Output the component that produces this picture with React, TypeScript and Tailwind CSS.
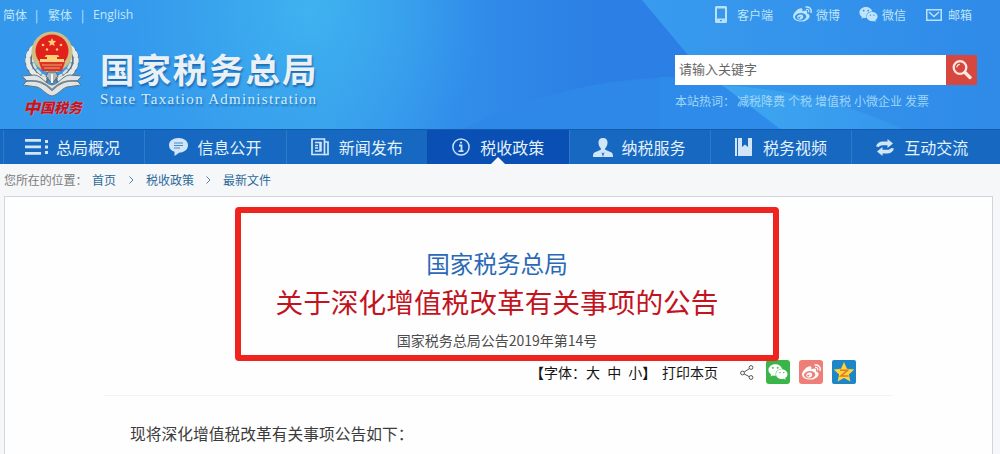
import type { ReactNode } from 'react'
import { FaWeibo, FaWeixin } from 'react-icons/fa'

const sans = "font-['Noto_Sans_CJK_SC',sans-serif]"

const PhoneIcon = () => (
  <svg width="12" height="17" viewBox="0 0 12 17" fill="#b9e2fa">
    <path fillRule="evenodd" d="M1.5 0h9A1.5 1.5 0 0 1 12 1.500v14a1.500 1.500 0 0 1-1.500 1.500h-9A1.500 1.500 0 0 1 0 15.500v-14A1.500 1.500 0 0 1 1.500 0zM2 2.500v10h8v-10zM5 14v1.300h2V14z" />
  </svg>
)

const MailIcon = () => (
  <svg width="16" height="12" viewBox="0 0 16 12" fill="none" stroke="#b9e2fa" strokeWidth="1.5">
    <rect x=".75" y=".75" width="14.500" height="10.500" />
    <path d="M3 3l5 4.500L13 3" />
  </svg>
)

const SearchIcon = () => (
  <svg width="22" height="22" viewBox="0 0 22 22" fill="none" stroke="#ffe9e2" strokeLinecap="round">
    <circle cx="9" cy="8.500" r="6.300" strokeWidth="2.300" />
    <path d="M5.800 8a3.200 3.200 0 0 1 2.600-2.700" strokeWidth="1.200" />
    <path d="M14 13.500l5 5" strokeWidth="3.400" />
  </svg>
)

const Emblem = () => (
  <svg width="62" height="66" viewBox="0 0 62 66">
    {/* wheat ears */}
    <g fill="none" strokeLinecap="round">
      <path d="M13 17C4 26 5 42 24 49M49 17c9 9 8 25-11 32" stroke="#5c7285" strokeWidth="7" />
      <path d="M12 17C3 26 5 42 24 49M50 17c9 9 7 25-12 32" stroke="#e6ebe9" strokeWidth="5" strokeDasharray="2.5 3.800" />
      <path d="M15 20C9 28 12 40 27 47M47 20c6 8 3 20-12 27" stroke="#dfe0d4" strokeWidth="2.500" strokeDasharray="4 3" />
    </g>
    <circle cx="31" cy="21" r="20.500" fill="#cfbd86" />
    <circle cx="31" cy="20" r="16.500" fill="#e3211c" />
    <path d="M18 31h26l-3 9H21z" fill="#d9332a" />
    <g fill="#ffd07a">
      <path d="M31 7l1.200 2.700 3 .3-2.200 2 .6 3-2.600-1.500-2.600 1.500.6-3-2.200-2 3-.3z" />
      <circle cx="22" cy="14" r="1.300" />
      <circle cx="40" cy="14" r="1.300" />
      <circle cx="26" cy="18.500" r="1.200" />
      <circle cx="36" cy="18.500" r="1.200" />
      <path d="M25 24h12l1.500 2H36v2h7v3H19v-3h7v-2h-2.500z" />
    </g>
    <path d="M21 34h20M23 37h16" stroke="#e9a868" strokeWidth="1.200" />
    {/* ribbon */}
    <path d="M1 45l13-1c8 2 10 9 17 10 7-1 9-8 17-10l13 1-5 5 4 4-14 2c-6 2-9 8-15 9-6-1-9-7-15-9L2 54l4-4z" fill="#dfe5e7" stroke="#65747d" strokeWidth="1" />
    <path d="M6 50c10-1 17 1 25 9 8-8 15-10 25-9" fill="none" stroke="#77858c" strokeWidth="1.800" />
    <path d="M25 45l6 8 6-8-2-4h-8z" fill="#a9b6bb" stroke="#566770" />
    <path d="M31 43v9" stroke="#f6f7f4" strokeWidth="2" />
  </svg>
)

const HeaderBackdrop = () => (
  <svg className="absolute inset-0" width="1000" height="129" viewBox="0 0 1000 129">
    <defs>
      <linearGradient id="base">
        <stop offset="0" stopColor="#3397ec" />
        <stop offset=".18" stopColor="#359bed" />
        <stop offset=".33" stopColor="#389fec" />
        <stop offset=".45" stopColor="#318eea" />
        <stop offset=".6" stopColor="#2c7fe4" />
        <stop offset="1" stopColor="#2c80e4" />
      </linearGradient>
      <radialGradient id="glow" cx="310" cy="10" r="180" gradientUnits="userSpaceOnUse">
        <stop offset="0" stopColor="#3fb2f0" />
        <stop offset="1" stopColor="#3ba9ee" stopOpacity="0" />
      </radialGradient>
      <linearGradient id="right">
        <stop offset="0" stopColor="#389bee" />
        <stop offset="1" stopColor="#2f8ae8" />
      </linearGradient>
      <linearGradient id="beam">
        <stop offset="0" stopColor="#3ea6f1" />
        <stop offset="1" stopColor="#3da5f1" stopOpacity=".3" />
      </linearGradient>
    </defs>
    <path d="M0 0h1000v129H0z" fill="url(#base)" />
    <path d="M0 0h1000v129H0z" fill="url(#glow)" />
    <path d="M464 129C540 92 600 79 680 77h50l50 52z" fill="#2e88e7" />
    <path d="M642 0h358v129H780L688 55z" fill="url(#right)" />
    <path d="M660 77h62l58 52H660z" fill="#2f8be9" />
    <path d="M722 85l58 44h122q-80-38-180-44z" fill="url(#beam)" />
  </svg>
)

const MenuIcon = () => (
  <svg width="24" height="16" viewBox="0 0 24 16" fill="#d0e6f8">
    <path d="M0 0h16v2.800H0zM0 6.500h16v2.800H0zM0 13h16v2.800H0zM20 1h3v3h-3zM20 6.500h3v3h-3zM20 12h3v3h-3z" />
  </svg>
)

const ChatIcon = () => (
  <svg width="19" height="18" viewBox="0 0 19 18">
    <path d="M9.500 0C15 0 19 3 19 7.200c0 4.300-4 7.300-8.500 7.300L5.500 18v-4.200C2 12.700 0 10.300 0 7.200 0 3 4 0 9.500 0z" fill="#d0e6f8" />
    <path d="M5 5h9M5 7.500h9M5 10h6" stroke="#4c86cb" strokeWidth="1.200" />
  </svg>
)

const NewsIcon = () => (
  <svg width="18" height="18" viewBox="0 0 18 18" fill="none" stroke="#d0e6f8">
    <path d="M1 1h12.500v15.500H1z" strokeWidth="1.700" />
    <path d="M13.500 4H17v12.500h-4" strokeWidth="1.700" />
    <path d="M4 4.500h6.500M4 7.500h3M4 10h3M4 13h6.500" strokeWidth="1.300" />
    <path d="M9.500 4v9" strokeWidth="2.500" />
  </svg>
)

const InfoIcon = () => (
  <svg width="18" height="18" viewBox="0 0 18 18" fill="none" stroke="#c7e1fa">
    <circle cx="9" cy="9" r="8.100" strokeWidth="1.500" />
    <path d="M7 7.500h2.500V13M6.500 13.200h5M8 4.700h2" strokeWidth="1.800" />
  </svg>
)

const PersonIcon = () => (
  <svg width="20" height="19" viewBox="0 0 20 19" fill="#d0e6f8">
    <path d="M10 0c3.300 0 4.800 2 4.500 5-.2 2.500-1 4-2.300 5.200v1.600l5.800 2.400c1.500.6 2 1.700 2 4.800H0c0-3.100.5-4.200 2-4.800l5.800-2.400v-1.600C6.500 9 5.700 7.500 5.500 5 5.200 2 6.700 0 10 0z" />
    <path d="M8.500 14l1.500 1.500 1.500-1.500-1.500 5z" fill="#1768c1" />
  </svg>
)

const BookIcon = () => (
  <svg width="17" height="18" viewBox="0 0 17 18" fill="#d0e6f8">
    <path d="M0 0h2v18H0zM3 0h4v9l3-2.500L13 9V0h4v18H3z" />
  </svg>
)

const SyncIcon = () => (
  <svg width="18" height="17" viewBox="0 0 18 17" fill="#d0e6f8">
    <path d="M0 7.500C1 3.700 4.500 2 8 2.500h3.500V0L17 4.500 11.500 9V6.300H8C5.500 5.800 4 6.500 2.800 8z" />
    <path d="M18 9.500c-1 3.800-4.500 5.500-8 5H6.500V17L1 12.500 6.500 8v2.700H10c2.500.5 4 -.2 5.200-1.700z" />
  </svg>
)

const navItems: { label: string; icon: ReactNode; active?: boolean }[] = [
  { label: '总局概况', icon: <MenuIcon /> },
  { label: '信息公开', icon: <ChatIcon /> },
  { label: '新闻发布', icon: <NewsIcon /> },
  { label: '税收政策', icon: <InfoIcon />, active: true },
  { label: '纳税服务', icon: <PersonIcon /> },
  { label: '税务视频', icon: <BookIcon /> },
  { label: '互动交流', icon: <SyncIcon /> },
]

const Header = () => (
  <header className="relative h-[129px] overflow-hidden bg-[#3399ec]">
    <HeaderBackdrop />
    <div className="relative flex h-full justify-between">
      <div>
        <div className="flex h-[30px] items-center pl-[3px] text-xs leading-[30px] text-[#c3e7fb]">
          <span className="w-8">简体</span>
          <span className="w-[13px]">|</span>
          <span className="w-[33px]">繁体</span>
          <span className="w-3">|</span>
          <span className="font-['Open_Sans',sans-serif] text-[12.200px]">English</span>
        </div>
        <div className="flex pl-[21px]">
          <div className="flex w-[79px] flex-col pt-px">
            <Emblem />
            <span className="-mt-[3px] flex w-[62px] items-center pl-[2px] text-[14px] leading-[26px] font-black whitespace-nowrap text-[#c4151f] italic [text-shadow:0_0_1px_#c9dcf0]">
              <span className="text-[17px]">中</span>国税务
            </span>
          </div>
          <div className="pt-[15px] [text-shadow:1px_2px_2px_rgba(10,70,140,0.6)]">
            <h1 className="text-[34.500px] leading-[46px] font-bold tracking-[1.900px] whitespace-nowrap text-[#e9f1f6]">国家税务总局</h1>
            <p className="pt-px font-['Liberation_Serif',serif] text-[15px] leading-[14px] tracking-[1.300px] whitespace-nowrap text-[#d4ecfb]">
              State Taxation Administration
            </p>
          </div>
        </div>
      </div>

      <div className="w-[325px] text-xs text-[#bfe4fa]">
        <div className="flex h-[29px] items-center pl-10 whitespace-nowrap">
          <span className="flex w-[78px] items-center gap-[10px]"><PhoneIcon />客户端</span>
          <span className="flex w-[66px] items-center gap-1"><FaWeibo className="h-[19px] w-[19px]" />微博</span>
          <span className="flex w-[67px] items-center gap-1"><FaWeixin className="h-[19px] w-[19px]" />微信</span>
          <span className="flex items-center gap-[6px]"><MailIcon />邮箱</span>
        </div>
        <div className="mt-[26px] flex h-[30px] w-[302px]">
          <div className="flex-1 bg-white pl-1 text-[13px] leading-[28px] text-[#666]">请输入关键字</div>
          <button className="flex w-[31px] items-center justify-center bg-[#d6473f]"><SearchIcon /></button>
        </div>
        <div className="flex h-[32px] items-center gap-[3px] whitespace-nowrap text-[#9fd6f8]">
          <span className="w-[59px]">本站热词：</span>
          <span>减税降费</span>
          <span>个税</span>
          <span>增值税</span>
          <span>小微企业</span>
          <span>发票</span>
        </div>
      </div>
    </div>
  </header>
)

const Nav = () => (
  <nav className="flex h-[35px] border-t border-[#125cb0] bg-[#1768c1] pl-[3px]">
    {navItems.map((item) => (
      <div
        key={item.label}
        className={
          item.active
            ? 'relative flex w-[141.400px] items-center gap-[7px] border-l border-[#0b4ea8] bg-[#0a4fb3] pl-[21px]'
            : 'flex w-[141.400px] items-center gap-[7px] border-l border-[#2f79c9] pl-[21px]'
        }
      >
        <span className="flex w-6 justify-center">{item.icon}</span>
        <span className="text-base leading-[34px] text-[#e3f2fd]">{item.label}</span>
        {item.active && (
          <span className="absolute bottom-0 left-[63px] border-x-[7px] border-b-[7px] border-x-transparent border-b-[#f6f8fb]" />
        )}
      </div>
    ))}
  </nav>
)

const Chevron = () => (
  <svg width="5" height="8" viewBox="0 0 5 8" fill="none" stroke="#5c7f9c">
    <path d="M.5.500L4 4 .5 7.500" />
  </svg>
)

const Breadcrumb = () => (
  <div className="flex h-8 items-center pl-[4px] text-xs whitespace-nowrap text-[#2a6a9a]">
    <span className="w-[88px] tracking-[-0.100px] text-[#7b7b7b]">您所在的位置：</span>
    <span className="w-[37px]">首页</span>
    <span className="w-[17px]"><Chevron /></span>
    <span className="w-[60px]">税收政策</span>
    <span className="w-[17px]"><Chevron /></span>
    <span>最新文件</span>
  </div>
)

const ShareIcon = () => (
  <svg width="14" height="15" viewBox="0 0 14 15" fill="none" stroke="#555">
    <circle cx="2.500" cy="8" r="1.900" />
    <circle cx="11" cy="2.500" r="1.900" />
    <circle cx="11" cy="12.500" r="1.900" />
    <path d="M4.200 7l5-3.300M4.200 9l5 2.600" />
  </svg>
)

const QzoneIcon = () => (
  <svg width="24" height="24" viewBox="0 0 24 24">
    <path d="M12 2l3 6.700 7.300.8-5.400 4.900 1.500 7.200L12 18l-6.400 3.600 1.500-7.200L1.700 9.500 9 8.700z" fill="#fcd43b" />
    <path d="M8 10.300h7.500L9 16h7.500" fill="none" stroke="#e5781c" strokeWidth="1.600" />
  </svg>
)

const Article = () => (
  <main className="relative mr-[7px] ml-1 h-[258px] border border-b-0 border-[#d2d5d9] bg-[#fefefe]">
    {/* red frame around the heading */}
    <div className="absolute top-[10px] left-[230px] h-[154px] w-[544px] rounded-[4px] border-6 border-[#ef241e]" />
    <div className="flex flex-col items-center pt-[49px] pr-[3px] whitespace-nowrap">
      <h2 className="text-[23.600px] leading-[34px] text-[#2b69b6]">国家税务总局</h2>
      <h2 className="text-[27.700px] leading-[42px] text-[#c2141e]">关于深化增值税改革有关事项的公告</h2>
      <p className="mt-[6px] text-[14px] leading-[24px] text-[#4c4c4c]">国家税务总局公告2019年第14号</p>
    </div>
    <div className="mt-[6px] flex h-[28px] items-center pl-[525px] text-sm whitespace-nowrap text-[#151515]">
      <span className="w-[132px] [word-spacing:4px]"><b>【</b>字体：大 中 小<b>】</b></span>
      <span className="w-[78px]">打印本页</span>
      <ShareIcon />
      <div className="ml-3 flex gap-[9px]">
        <span className="flex h-6 w-6 items-center justify-center rounded-[3px] bg-[#39b54a] text-white"><FaWeixin className="h-5 w-5" /></span>
        <span className="flex h-6 w-6 items-center justify-center rounded-[3px] bg-[#ee7f78] text-white"><FaWeibo className="h-[19px] w-[19px]" /></span>
        <span className="h-6 w-6 rounded-[2px] bg-[#1e86c8]"><QzoneIcon /></span>
      </div>
    </div>
    <div className="mx-[99px] mt-[9px] border-t border-[#f3f3f3]" />
    <p className="mt-[26px] pl-[125px] text-[15.750px] leading-[24px] text-[#3c3c3c]">现将深化增值税改革有关事项公告如下：</p>
  </main>
)

export default function App() {
  return (
    <div lang="zh-CN" className={`h-[454px] w-[1000px] overflow-hidden bg-[#f6f7f9] ${sans}`}>
      <Header />
      <Nav />
      <Breadcrumb />
      <Article />
    </div>
  )
}
